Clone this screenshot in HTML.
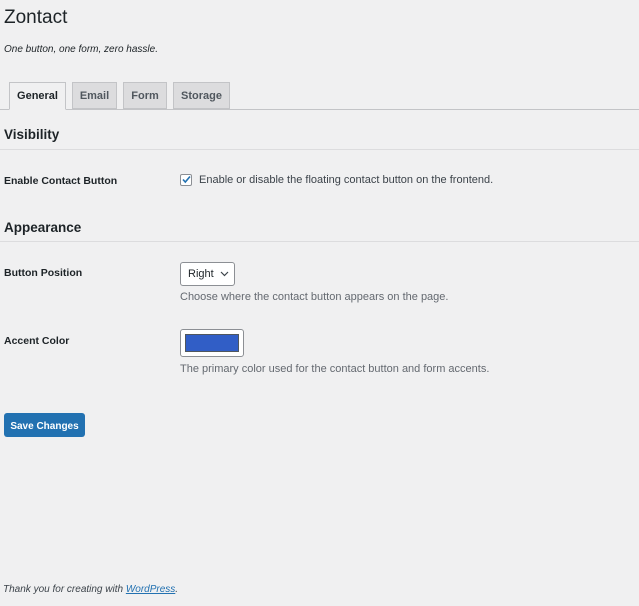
<!DOCTYPE html>
<html><head><meta charset="utf-8"><style>
body{margin:0;width:639px;height:606px;background:#f0f0f1;font-family:"Liberation Sans",sans-serif;color:#1d2327;position:relative;overflow:hidden}
.a{position:absolute;white-space:nowrap}
.tab{position:absolute;top:82px;height:27px;border:1px solid #c3c4c7;background:#dcdcde;font-size:11px;font-weight:bold;color:#50575e;box-sizing:border-box;text-align:center;line-height:27px}
.lbl{font-size:10.5px;font-weight:bold}
.desc{font-size:11px;color:#646970}
h2{margin:0;font-size:13.5px;font-weight:bold}
.hr{position:absolute;left:0;width:639px;height:1px;background:#dcdcde}
</style></head><body>
<div class="a" style="left:4px;top:7px;font-size:19px">Zontact</div>
<div class="a" style="left:4px;top:44px;font-size:10px;font-style:italic">One button, one form, zero hassle.</div>
<div class="hr" style="top:109px;background:#c3c4c7"></div>
<div class="tab" style="left:9px;width:57px;background:#f0f0f1;color:#1d2327;border-bottom-color:#f0f0f1;height:28px">General</div>
<div class="tab" style="left:72px;width:45px">Email</div>
<div class="tab" style="left:123px;width:44px">Form</div>
<div class="tab" style="left:173px;width:57px">Storage</div>
<h2 class="a" style="left:4px;top:127px">Visibility</h2>
<div class="hr" style="top:149px"></div>
<div class="a lbl" style="left:4px;top:175px">Enable Contact Button</div>
<div class="a" style="left:180px;top:174px;width:10px;height:10px;border:1px solid #8c8f94;border-radius:2px;background:#fff"></div>
<svg class="a" style="left:181px;top:174px" width="11" height="11" viewBox="0 0 11 11"><path d="M2 5.5l2.3 2.5L9 2.5" stroke="#2271b1" stroke-width="1.6" fill="none"/></svg>
<div class="a desc" style="left:199px;top:174px;color:#3c434a">Enable or disable the floating contact button on the frontend.</div>
<h2 class="a" style="left:4px;top:220px">Appearance</h2>
<div class="hr" style="top:241px"></div>
<div class="a lbl" style="left:4px;top:267px">Button Position</div>
<div class="a" style="left:180px;top:262px;width:53px;height:22px;border:1px solid #8c8f94;border-radius:3px;background:#fff;font-size:11px;line-height:22px;box-sizing:content-box"><span style="position:absolute;left:7px">Right</span><svg style="position:absolute;left:39px;top:8px" width="9" height="6"><path d="M1 1l3.5 3.5L8 1" stroke="#3c434a" stroke-width="1.2" fill="none"/></svg></div>
<div class="a desc" style="left:180px;top:291px">Choose where the contact button appears on the page.</div>
<div class="a lbl" style="left:4px;top:335px">Accent Color</div>
<div class="a" style="left:180px;top:329px;width:62px;height:26px;border:1px solid #8c8f94;border-radius:3px;background:#fff"></div>
<div class="a" style="left:185px;top:334px;width:54px;height:18px;background:#315ec6;border:1px solid #50575e;box-sizing:border-box"></div>
<div class="a desc" style="left:180px;top:363px">The primary color used for the contact button and form accents.</div>
<div class="a" style="left:4px;top:413px;width:81px;height:24px;background:#2271b1;border-radius:3px;color:#fff;font-size:10px;font-weight:bold;text-align:center;line-height:27px">Save Changes</div>
<div class="a" style="left:3px;top:584px;font-size:10px;font-style:italic;color:#3c434a">Thank you for creating with <span style="color:#2271b1;text-decoration:underline">WordPress</span>.</div>
</body></html>
